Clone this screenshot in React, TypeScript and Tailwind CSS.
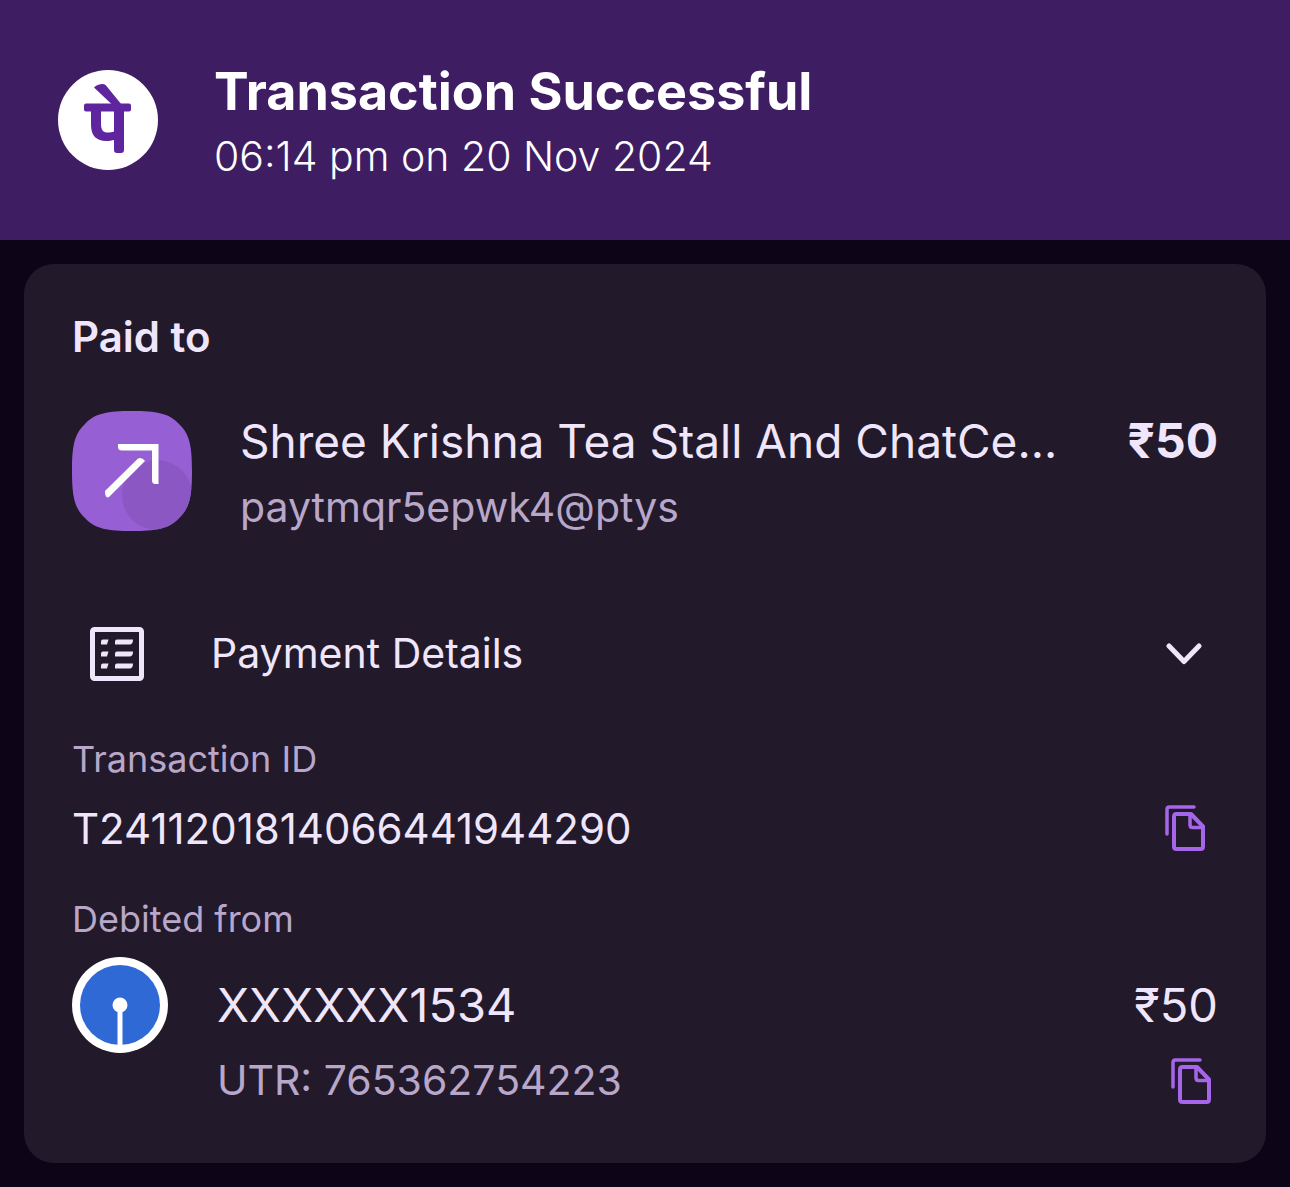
import React from "react";

function BrandLogo() {
  return (
    <svg viewBox="0 0 100 100" className="size-[100px] shrink-0" role="img" aria-label="PhonePe">
      <circle cx="50" cy="50" r="50" fill="#fff" />
      <g fill="#5f259f">
        <path d="M36 17.500 Q39 14 45 14 Q47 14 48 15.500 L63.500 34.500 H54 Z" />
        <rect x="26" y="33.500" width="47" height="8" rx="2" />
        <path d="M33 38 V55 C33 66 39 71 48 71 C51 71 54 70.500 56 70 V80 Q56 83 59 83 H63 Q66 83 66 80 V38 H56 V61.500 C54 62.300 52 62.500 50 62.500 C45 62.500 43 60 43 54 V38 Z" />
      </g>
    </svg>
  );
}

function TransferTile() {
  return (
    <svg viewBox="0 0 120 120" className="size-[120px] shrink-0" aria-hidden="true">
      <defs>
        <clipPath id="tile">
          <path d="M60 0 C84 0 97 2 107 13 C118 23 120 36 120 60 C120 84 118 97 107 107 C97 118 84 120 60 120 C36 120 23 118 13 107 C2 97 0 84 0 60 C0 36 2 23 13 13 C23 2 36 0 60 0 Z" />
        </clipPath>
      </defs>
      <g clipPath="url(#tile)">
        <rect width="120" height="120" fill="#965fd4" />
        <circle cx="85" cy="84" r="35" fill="#8b57c2" />
      </g>
      <path d="M46 33 H86.500 V73 H83 Q80 73 80 69 V39.500 H50 Q46 39.500 46 36 Z" fill="#fff" />
      <path d="M33 80 L66 47.500 Q70 46 73 50 L37 86 Q33 88 33 80 Z" fill="#fff" />
    </svg>
  );
}

function DetailsIcon() {
  return (
    <svg viewBox="0 0 54 54" className="size-[54px] shrink-0" aria-hidden="true">
      <rect x="2.500" y="2.500" width="49" height="49" rx="2" fill="none" stroke="#f0e6fb" strokeWidth="5" />
      <g fill="#f0e6fb">
        {[12.500, 24.500, 36.500].map((y) => (
          <g key={y} transform={`translate(0 ${y})`}>
            <path d="M13 0 H18.500 L17 5 H11 V2 Q11 0 13 0 Z" />
            <path d="M27 0 H43 Q43 5 39.500 5 H25 V2 Q25 0 27 0 Z" />
          </g>
        ))}
      </g>
    </svg>
  );
}

function CopyIcon() {
  return (
    <svg viewBox="0 0 40 46" className="h-[46px] w-10" fill="none" stroke="#a566ea" strokeWidth="4" aria-hidden="true">
      <path d="M2 29 V4.500 Q2 2 4.500 2 H29" strokeWidth="3.500" strokeLinecap="round" />
      <path d="M26 9 H11.500 Q9 9 9 11.500 V41.500 Q9 44 11.500 44 H35.500 Q38 44 38 41.500 V21.500 Z" strokeLinejoin="round" />
      <path d="M25 9 V20 Q25 22.500 27.500 22.500 H38" strokeWidth="3.500" />
    </svg>
  );
}

export default function App() {
  return (
    <div className="min-h-screen bg-[#0d0417] pb-6 font-['Inter',sans-serif] text-[#f0e6fb]">
      <header className="flex h-60 items-center gap-14 bg-[#3f1d63] px-[58px] text-white">
        <BrandLogo />
        <div className="pt-2">
          <h1 className="text-[52px] leading-[64px] font-bold">Transaction Successful</h1>
          <p className="text-[41px] leading-[64px] font-light">06:14 pm on 20 Nov 2024</p>
        </div>
      </header>

      <main className="mx-6 mt-6 rounded-[30px] bg-[#22192b] px-12 pt-[47px] pb-[54px]">
        <h2 className="text-[42px] leading-[52px] font-semibold">Paid to</h2>
        <div className="mt-12 flex items-start gap-12">
          <TransferTile />
          <div className="min-w-0 flex-1 whitespace-nowrap">
            <p className="text-[46px] leading-[60px]">Shree Krishna Tea Stall And ChatCe...</p>
            <p className="mt-2 text-[41px] leading-[56px] text-[#b8a7c8]">paytmqr5epwk4@ptys</p>
          </div>
          <p className="text-[48px] leading-[60px] font-bold">₹50</p>
        </div>

        <button type="button" className="mt-[87px] flex h-16 w-full items-center pr-4 pl-[18px] text-left">
          <DetailsIcon />
          <span className="ml-[67px] flex-1 text-[41px]">Payment Details</span>
          <svg viewBox="0 0 36 22" className="h-[22px] w-9" fill="none" stroke="#f0e6fb" strokeWidth="5" strokeLinecap="round" strokeLinejoin="round" aria-hidden="true">
            <path d="M3 3 L18 18.500 L33 3" />
          </svg>
        </button>

        <h3 className="mt-12 text-[36px] leading-[50px] text-[#b8a7c8]">Transaction ID</h3>
        <div className="mt-4 flex h-14 items-center justify-between pr-[13px]">
          <p className="text-[42px]">T2411201814066441944290</p>
          <button type="button" aria-label="Copy transaction ID"><CopyIcon /></button>
        </div>

        <h3 className="mt-[38px] text-[36px] leading-[50px] text-[#b8a7c8]">Debited from</h3>
        <div className="mt-[13px] flex items-start gap-[49px]">
          <svg viewBox="0 0 96 96" className="size-24 shrink-0" role="img" aria-label="State Bank of India">
            <circle cx="48" cy="48" r="48" fill="#fff" />
            <circle cx="48" cy="48" r="40" fill="#2e69d6" />
            <circle cx="48" cy="48" r="7.500" fill="#fff" />
            <path d="M48 48 V90" stroke="#fff" strokeWidth="5" />
          </svg>
          <div className="flex-1">
            <div className="flex justify-between text-[47px] leading-[96px]">
              <p>XXXXXX1534</p>
              <p>₹50</p>
            </div>
            <div className="flex h-14 items-center justify-between pr-[7px]">
              <p className="text-[41px] text-[#b8a7c8]">UTR: 765362754223</p>
              <button type="button" aria-label="Copy UTR"><CopyIcon /></button>
            </div>
          </div>
        </div>
      </main>
    </div>
  );
}
